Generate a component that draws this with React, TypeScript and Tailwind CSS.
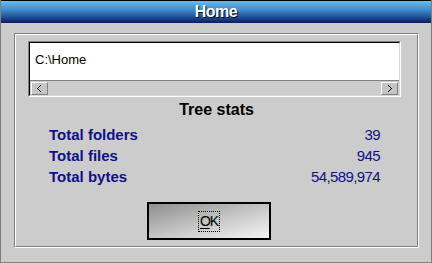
import React from "react";

const stats = [
  { label: "Total folders", value: "39" },
  { label: "Total files", value: "945" },
  { label: "Total bytes", value: "54,589,974" },
];

function ScrollButton({ dir }: { dir: "left" | "right" }) {
  return (
    <div className="w-[17px] h-[13px] bg-[#c4c4c4] border-t border-l border-white border-r border-b border-r-[#808080] border-b-[#808080] flex items-center justify-center">
      <svg width="5" height="7" viewBox="0 0 5 7" shapeRendering="crispEdges">
        {dir === "left" ? (
          <path d="M3 0h1v1H3zM2 1h1v1H2zM1 2h1v1H1zM0 3h1v1H0zM1 4h1v1H1zM2 5h1v1H2zM3 6h1v1H3z" fill="#000" />
        ) : (
          <path d="M1 0h1v1H1zM2 1h1v1H2zM3 2h1v1H3zM4 3h1v1H4zM3 4h1v1H3zM2 5h1v1H2zM1 6h1v1H1z" fill="#000" />
        )}
      </svg>
    </div>
  );
}

export default function App() {
  return (
    <div
      className="w-[432px] h-[263px] bg-[#cccccc] border-l border-r border-b border-[#808080] flex flex-col"
      style={{ fontFamily: '"Liberation Sans", Arial, sans-serif' }}
    >
      {/* Title bar */}
      <div className="h-[23px] border-t border-black bg-[linear-gradient(to_bottom,#6cbcec,#3f8cca_40%,#1b4c94_75%,#0c1c5e)] flex items-center justify-center">
        <span className="text-white font-bold text-[16px] leading-[22px] tracking-[-0.5px] [text-shadow:1px_1px_0_#000]">
          Home
        </span>
      </div>

      {/* Etched group panel */}
      <div className="mt-[10px] ml-[13px] w-[405px] h-[215px] border-t border-l border-[#808080] border-r border-b border-r-white border-b-white">
        <div className="h-full border-t border-l border-white border-r border-b border-r-[#808080] border-b-[#808080] flex flex-col">
          {/* Path box */}
          <div className="mt-[6px] ml-[12px] w-[373px] h-[56px] border-t border-l border-[#808080] border-r border-b border-r-white border-b-white">
            <div className="h-full border-t border-l border-black border-r border-b border-r-[#d8d8d8] border-b-[#d8d8d8] flex flex-col">
              <div className="h-[38px] bg-white border-b border-[#808080] pl-[5px] pt-[4px]">
                <span className="text-[13px] leading-[16px] text-black">C:\Home</span>
              </div>
              <div className="flex-1 flex items-start justify-between pl-[1px] pr-[1px] pt-[1px]">
                <ScrollButton dir="left" />
                <ScrollButton dir="right" />
              </div>
            </div>
          </div>

          <div className="mt-[4px] text-center font-bold text-[16px] leading-[18px] text-black">Tree stats</div>

          <div className="mt-[5px] pl-[33px] pr-[37px] flex flex-col">
            {stats.map((s) => (
              <div key={s.label} className="h-[21px] flex items-center justify-between text-[#10108a]">
                <span className="font-bold text-[15px] leading-[21px]">{s.label}</span>
                <span className="text-[15px] leading-[21px] tracking-[-0.6px]">{s.value}</span>
              </div>
            ))}
          </div>

          <button className="mt-[15px] ml-[131px] w-[124px] h-[38px] border-2 border-black bg-[linear-gradient(to_bottom_right,#8e8e8e,#c4c4c4_50%,#f6f6f6)] flex items-center justify-center">
            <span className="border border-dotted border-black px-[1px] h-[21px] flex items-center text-[14px] leading-[16px] tracking-[-1px] text-black">
              <span className="underline underline-offset-2">O</span>K
            </span>
          </button>
        </div>
      </div>
    </div>
  );
}
